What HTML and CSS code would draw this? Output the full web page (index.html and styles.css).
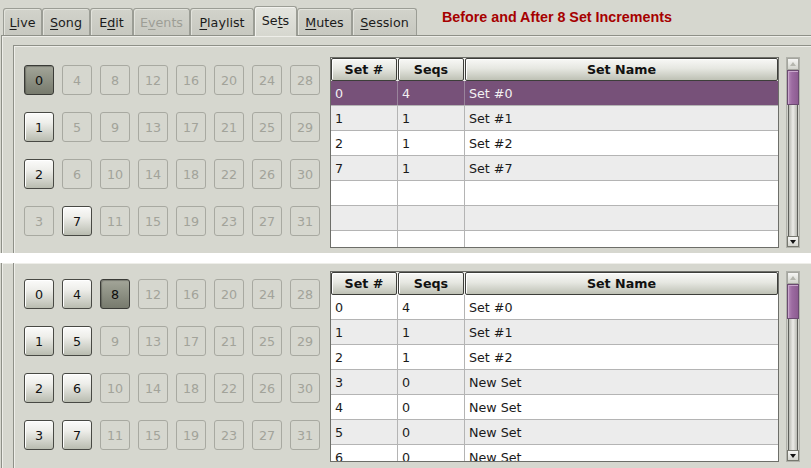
FILE: index.html
```html
<!DOCTYPE html>
<html>
<head>
<meta charset="utf-8">
<link rel="stylesheet" href="styles.css">
</head>
<body>
<div class="screen">
  <section class="pane pane-top">
    <div class="tabbar">
      <div class="tabs">
        <div class="tab t1"><u>L</u>ive</div>
        <div class="tab t2"><u>S</u>ong</div>
        <div class="tab t3">E<u>d</u>it</div>
        <div class="tab t4 disabled">E<u>v</u>ents</div>
        <div class="tab t5"><u>P</u>laylist</div>
        <div class="tab t6 active">Se<u>t</u>s</div>
        <div class="tab t7"><u>M</u>utes</div>
        <div class="tab t8"><u>S</u>ession</div>
      </div>
      <div class="title">Before and After 8 Set Increments</div>
    </div>
    <div class="nb-body">
      <div class="frame">
        <div class="grid">
          <div class="btn on">0</div><div class="btn">1</div><div class="btn">2</div><div class="btn off">3</div>
          <div class="btn off">4</div><div class="btn off">5</div><div class="btn off">6</div><div class="btn">7</div>
          <div class="btn off">8</div><div class="btn off">9</div><div class="btn off">10</div><div class="btn off">11</div>
          <div class="btn off">12</div><div class="btn off">13</div><div class="btn off">14</div><div class="btn off">15</div>
          <div class="btn off">16</div><div class="btn off">17</div><div class="btn off">18</div><div class="btn off">19</div>
          <div class="btn off">20</div><div class="btn off">21</div><div class="btn off">22</div><div class="btn off">23</div>
          <div class="btn off">24</div><div class="btn off">25</div><div class="btn off">26</div><div class="btn off">27</div>
          <div class="btn off">28</div><div class="btn off">29</div><div class="btn off">30</div><div class="btn off">31</div>
        </div>
        <div class="listwrap">
          <div class="table">
            <div class="thead"><div class="th">Set #</div><div class="th">Seqs</div><div class="th">Set Name</div></div>
            <div class="tr sel"><div class="td">0</div><div class="td">4</div><div class="td">Set #0</div></div>
            <div class="tr alt"><div class="td">1</div><div class="td">1</div><div class="td">Set #1</div></div>
            <div class="tr"><div class="td">2</div><div class="td">1</div><div class="td">Set #2</div></div>
            <div class="tr alt"><div class="td">7</div><div class="td">1</div><div class="td">Set #7</div></div>
            <div class="tr"><div class="td"></div><div class="td"></div><div class="td"></div></div>
            <div class="tr alt"><div class="td"></div><div class="td"></div><div class="td"></div></div>
            <div class="tr"><div class="td"></div><div class="td"></div><div class="td"></div></div>
          </div>
          <div class="scrollbar">
            <div class="sb-up"><span class="arr-up"></span></div>
            <div class="sb-thumb"></div>
            <div class="sb-trough"></div>
            <div class="sb-down"><span class="arr-down"></span></div>
          </div>
        </div>
      </div>
    </div>
  </section>
  <div class="sep"></div>
  <section class="pane pane-bottom">
    <div class="nb-body nb-cut">
      <div class="frame frame-cut">
        <div class="grid">
          <div class="btn">0</div><div class="btn">1</div><div class="btn">2</div><div class="btn">3</div>
          <div class="btn">4</div><div class="btn">5</div><div class="btn">6</div><div class="btn">7</div>
          <div class="btn on">8</div><div class="btn off">9</div><div class="btn off">10</div><div class="btn off">11</div>
          <div class="btn off">12</div><div class="btn off">13</div><div class="btn off">14</div><div class="btn off">15</div>
          <div class="btn off">16</div><div class="btn off">17</div><div class="btn off">18</div><div class="btn off">19</div>
          <div class="btn off">20</div><div class="btn off">21</div><div class="btn off">22</div><div class="btn off">23</div>
          <div class="btn off">24</div><div class="btn off">25</div><div class="btn off">26</div><div class="btn off">27</div>
          <div class="btn off">28</div><div class="btn off">29</div><div class="btn off">30</div><div class="btn off">31</div>
        </div>
        <div class="listwrap">
          <div class="table">
            <div class="thead"><div class="th">Set #</div><div class="th">Seqs</div><div class="th">Set Name</div></div>
            <div class="tr"><div class="td">0</div><div class="td">4</div><div class="td">Set #0</div></div>
            <div class="tr alt"><div class="td">1</div><div class="td">1</div><div class="td">Set #1</div></div>
            <div class="tr"><div class="td">2</div><div class="td">1</div><div class="td">Set #2</div></div>
            <div class="tr alt"><div class="td">3</div><div class="td">0</div><div class="td">New Set</div></div>
            <div class="tr"><div class="td">4</div><div class="td">0</div><div class="td">New Set</div></div>
            <div class="tr alt"><div class="td">5</div><div class="td">0</div><div class="td">New Set</div></div>
            <div class="tr"><div class="td">6</div><div class="td">0</div><div class="td">New Set</div></div>
          </div>
          <div class="scrollbar">
            <div class="sb-up"><span class="arr-up"></span></div>
            <div class="sb-thumb"></div>
            <div class="sb-trough"></div>
            <div class="sb-down"><span class="arr-down"></span></div>
          </div>
        </div>
      </div>
    </div>
  </section>
</div>
</body>
</html>
```

FILE: styles.css
```css
html, body {
  margin: 0;
  padding: 0;
  background: #ffffff;
  font-family: "DejaVu Sans", sans-serif;
}

.screen {
  width: 811px;
  height: 468px;
  overflow: hidden;
}

.pane {
  background: #d6d7cf;
  overflow: hidden;
  display: flex;
  flex-direction: column;
}

.pane-top { height: 253px; }
.pane-bottom { height: 205px; }

.sep {
  height: 10px;
  background: #ffffff;
}

/* tabs */
.tabbar {
  height: 35px;
  flex: none;
  display: flex;
  align-items: flex-end;
}

.tabs {
  display: flex;
  align-items: flex-end;
  margin-left: 3px;
}

.tab {
  box-sizing: border-box;
  height: 27px;
  padding-top: 4px;
  border: 1px solid #9b9d95;
  border-bottom: none;
  border-radius: 3px 3px 0 0;
  background: linear-gradient(#d2d3cb, #c7c8c0);
  box-shadow: inset 1px 1px 0 #e2e3dc;
  color: #1b1b1b;
  font-size: 12.7px;
  line-height: 20px;
  text-align: center;
  white-space: nowrap;
}

.tab u { text-decoration-thickness: 1px; text-underline-offset: 2px; }

.tab.t1 { width: 39px; }
.tab.t2 { width: 48px; }
.tab.t3 { width: 43px; }
.tab.t4 { width: 57px; }
.tab.t5 { width: 64px; }
.tab.t6 { width: 43px; }
.tab.t7 { width: 55px; }
.tab.t8 { width: 65px; }

.tab.disabled { color: #9d9e96; }

.tab.active {
  height: 30px;
  margin-bottom: -1px;
  padding-top: 4px;
  background: linear-gradient(#e4e5df, #d6d7cf);
  box-shadow: inset 1px 1px 0 #f2f2ee;
  position: relative;
  z-index: 1;
}

.title {
  align-self: flex-start;
  margin: 7px 0 0 25px;
  font-family: "Liberation Sans", Arial, sans-serif;
  font-weight: bold;
  font-size: 14.3px;
  line-height: 20px;
  color: #a60000;
  white-space: nowrap;
}

/* notebook body + frame */
.nb-body {
  flex: 1;
  margin-left: 1px;
  border-top: 1px solid #8e9088;
  border-left: 1px solid #8e9088;
  box-shadow: inset 1px 1px 0 #eeeee9;
}

.nb-body.nb-cut {
  border-top: none;
}

.frame {
  margin: 9px 0 0 11px;
  height: 100%;
  border-top: 1px solid #8e9088;
  border-left: 1px solid #8e9088;
  box-shadow: inset 1px 1px 0 #eeeee9;
  display: flex;
  align-items: flex-start;
}

.frame.frame-cut {
  margin-top: 0;
  border-top: none;
  box-shadow: inset 1px 0 0 #eeeee9;
}

/* button grid */
.grid {
  display: grid;
  grid-auto-flow: column;
  grid-template-rows: repeat(4, 30px);
  grid-auto-columns: 30px;
  column-gap: 8px;
  row-gap: 17px;
  margin: 19px 0 0 10px;
}

.frame-cut .grid { margin-top: 16px; }

.btn {
  box-sizing: border-box;
  width: 30px;
  height: 30px;
  padding-top: 2px;
  border: 1px solid #484944;
  border-radius: 3px;
  background: linear-gradient(#fbfbfa, #eeeeea 35%, #b9bcb0);
  box-shadow: inset 1px 1px 0 #ffffff;
  color: #111111;
  font-size: 12.7px;
  line-height: 26px;
  text-align: center;
}

.btn.on {
  border-color: #3a3b37;
  background: linear-gradient(#a3a599, #8d9083 50%, #777a6d);
  box-shadow: inset 1px 1px 1px rgba(0,0,0,0.25);
  color: #0d0d0d;
}

.btn.off {
  border-color: #a8a9a1;
  background: transparent;
  box-shadow: none;
  color: #a2a39a;
}

/* list */
.listwrap {
  display: flex;
  gap: 7px;
  margin: 11px 0 0 10px;
}

.frame-cut .listwrap { margin-top: 8px; }

.table {
  box-sizing: border-box;
  width: 449px;
  height: 191px;
  border: 1px solid #6d6e69;
  background: #ffffff;
  overflow: hidden;
}

.thead {
  display: flex;
  gap: 1px;
  height: 23px;
  background: #f3f3f0;
}

.th {
  box-sizing: border-box;
  width: 66px;
  height: 23px;
  padding-top: 1px;
  border: 1px solid #3d3e3a;
  border-radius: 2px;
  background: linear-gradient(#f8f8f6, #e6e7e1 45%, #bec1b5);
  box-shadow: inset 1px 1px 0 #ffffff;
  color: #111111;
  font-weight: bold;
  font-size: 12.7px;
  line-height: 20px;
  text-align: center;
}

.th:last-child { flex: 1; }

.tr {
  box-sizing: border-box;
  display: grid;
  grid-template-columns: 67px 67px 1fr;
  height: 25px;
  border-bottom: 1px solid #b4b4b4;
  color: #1a1a1a;
  font-size: 12.7px;
}

.tr.alt { background: #ececec; }

.tr.sel {
  background: #775179;
  color: #f2f0f2;
}

.td {
  padding: 2px 0 0 4px;
  line-height: 22px;
  border-right: 1px solid #b4b4b4;
  white-space: nowrap;
  overflow: hidden;
}

.td:last-child { border-right: none; }

.tr.sel .td { border-right-color: #9a849c; }
.tr.sel .td:last-child { border-right: none; }

/* scrollbar */
.scrollbar {
  box-sizing: border-box;
  width: 14px;
  height: 191px;
  display: flex;
  flex-direction: column;
  border: 1px solid #b0b1aa;
  background: #cfd0c9;
}

.sb-up, .sb-down {
  box-sizing: border-box;
  height: 12px;
  flex: none;
  border: 1px solid #a4a59e;
  background: linear-gradient(#f6f6f4, #d3d4cd);
  display: flex;
  align-items: center;
  justify-content: center;
}

.sb-down { height: 11px; border-color: #77786f; }

.arr-up {
  width: 0;
  height: 0;
  border-left: 3px solid transparent;
  border-right: 3px solid transparent;
  border-bottom: 4px solid #b5b6ae;
}

.arr-down {
  width: 0;
  height: 0;
  border-left: 3px solid transparent;
  border-right: 3px solid transparent;
  border-top: 4px solid #111111;
}

.sb-thumb {
  box-sizing: border-box;
  height: 35px;
  flex: none;
  border: 1px solid #6a4a70;
  background: linear-gradient(90deg, #b58bb9, #9c6ba1 40%, #8c5c91);
  box-shadow: inset 1px 1px 0 #c9a7cc;
}

.sb-trough {
  flex: 1;
  background: linear-gradient(90deg, #5e5f5a 0, #5e5f5a 1px, #b9bab3 1px, #ecece8 50%, #b9bab3 calc(100% - 1px), #5e5f5a calc(100% - 1px));
  margin: 0 1px;
}
```
